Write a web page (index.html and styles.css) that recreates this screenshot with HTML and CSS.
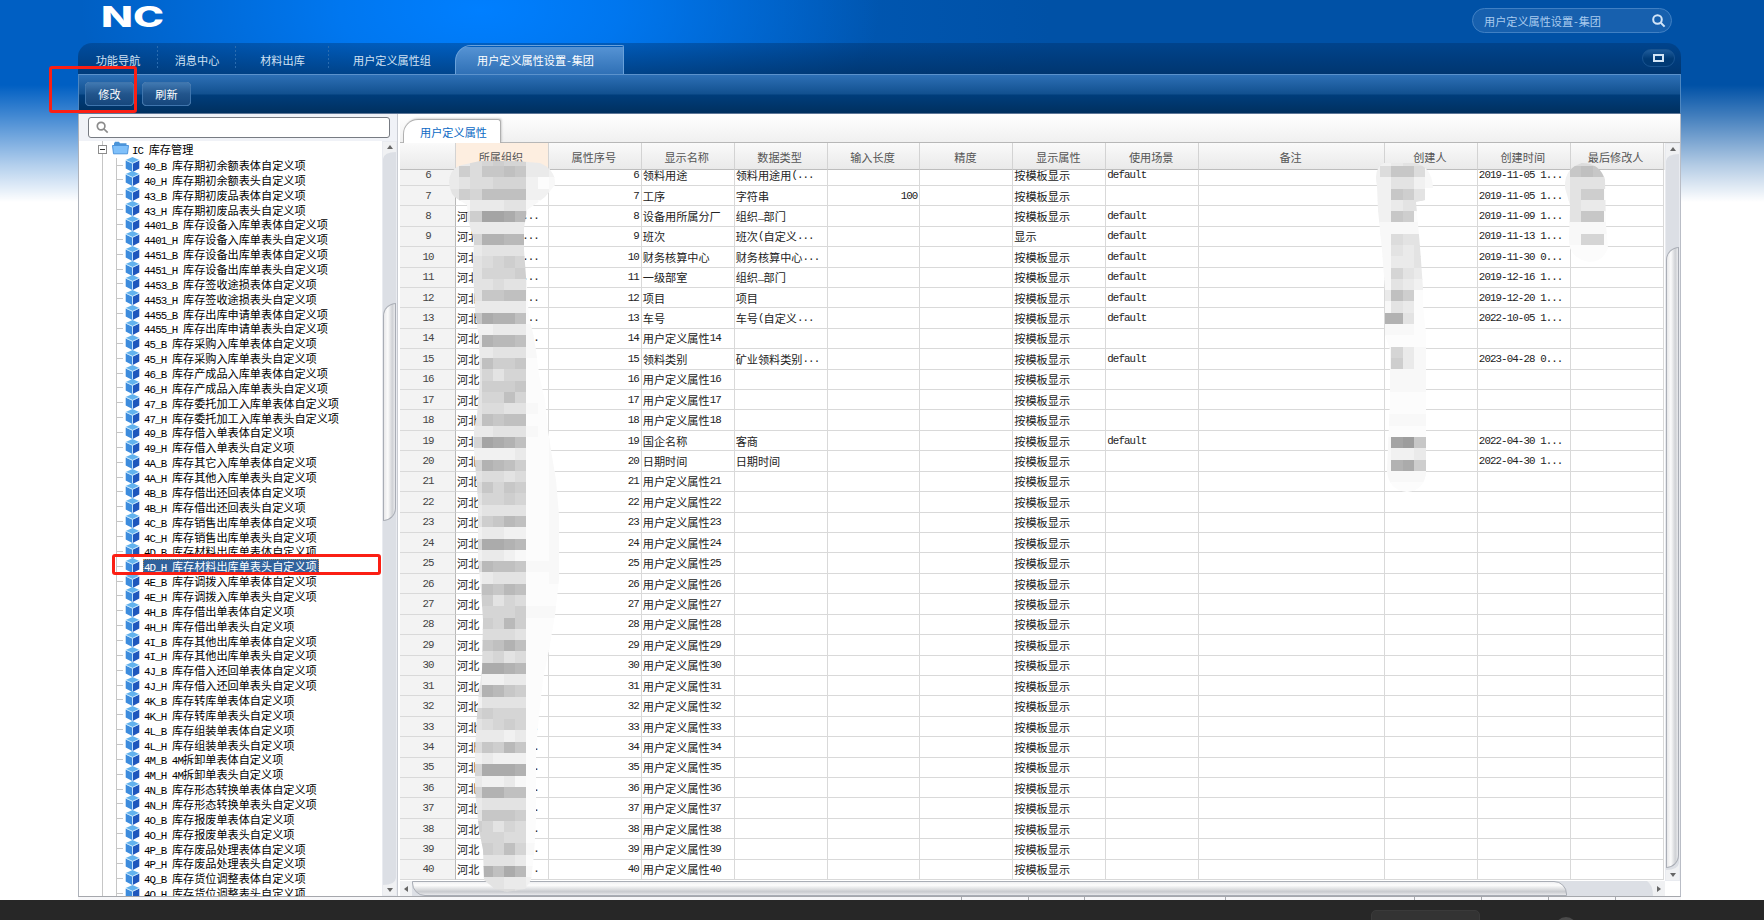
FILE: index.html
```html
<!DOCTYPE html>
<html lang="zh-CN">
<head>
    <meta charset="UTF-8">
    <meta name="viewport" content="width=device-width, initial-scale=1.0">
    <title>用户定义属性设置-集团</title>
    <link rel="stylesheet" href="styles.css">
</head>
<body>
    <div class="app">
        <header class="header">
            <svg class="logo" width="66" height="36" viewBox="0 0 66 36">
                <text x="0" y="24.5" textLength="63" lengthAdjust="spacingAndGlyphs">NC</text>
            </svg>
            <div class="top-search">
                <span>用户定义属性设置<span class="dash">-</span>集团</span>
                <svg width="14" height="14" viewBox="0 0 14 14"><circle cx="5.5" cy="5.5" r="4.3"/><path d="M8.8 8.8 12.6 12.6"/></svg>
            </div>
        </header>

        <nav class="tabs">
            <div class="tab tab-1">功能导航</div>
            <div class="tab tab-2">消息中心</div>
            <div class="tab tab-3">材料出库</div>
            <div class="tab tab-4">用户定义属性组</div>
            <div class="tab active">用户定义属性设置<span class="dash">-</span>集团</div>
            <div class="restore"><i></i></div>
        </nav>

        <div class="toolbar">
            <button>修改</button>
            <button>刷新</button>
        </div>

        <div class="main">
            <aside class="side">
                <div class="side-search">
                    <div class="side-input">
                        <svg width="13" height="13" viewBox="0 0 14 14"><circle cx="5.5" cy="5.5" r="4.1"/><path d="M8.6 8.6 12.6 12.6"/></svg>
                    </div>
                </div>
                <div class="side-body">
                    <div class="tree">
                        <div class="tree-root">
                            <span class="toggle"></span>
                            <svg width="17" height="14" viewBox="0 0 17 14"><path d="M2 2.5 3 .8h4l1 1.4h6.5V6H2z" fill="#4b94d8"/><path d="M.5 4.5h16l-1 8.3h-14z" fill="#7fc0fa" stroke="#4c94dc"/></svg>
                            <span class="root-text">IC 库存管理</span>
                        </div>
                        <div class="tree-list" id="tree-list">
                            <!-- items are added by script -->
                        </div>
                    </div>
                    <div class="vscroll">
                        <div class="arrow up"></div>
                        <div class="track"><div class="thumb side-thumb"></div></div>
                        <div class="arrow down"></div>
                    </div>
                </div>
            </aside>

            <section class="content">
                <div class="panel-tabs"><div class="panel-tab">用户定义属性</div></div>
                <div class="grid-area">
                    <div class="grid">
                        <div class="row head" id="grid-head"></div>
                        <div class="grid-body"><div class="grid-rows" id="grid-rows"></div></div>
                    </div>
                    <div class="vscroll grid-scroll">
                        <div class="arrow up"></div>
                        <div class="track"><div class="thumb grid-thumb"></div></div>
                        <div class="arrow down"></div>
                    </div>
                </div>
                <div class="hscroll">
                    <div class="arrow left"></div>
                    <div class="htrack"><div class="hthumb"></div></div>
                    <div class="arrow right"></div>
                </div>
            </section>
        </div>
        <div class="statusbar">
            <i></i><i></i><i></i><i></i><i></i><i></i><i></i><i></i>
        </div>
    </div>
    <footer class="taskbar"><div class="task"></div><div class="dot"></div></footer>

    <svg class="masks" width="1764" height="920">
        <defs>
            <clipPath id="clip-org"><path d="M449 182Q450 168 462 165L480 161H515L540 163Q556 170 555 185L545 197 537 203 527 210 524 228 524 250 527 290 529 318 533 333 536 350 539 375 545 400 548 430 551 450 556 480 559 515V580L555 615 549 650 543 680 539 715 536 750V820L534 855 531 880 525 889 507 892 495 889 484 880 483 850 479 830 475 790V750L477 715 479 690 482 670 483 620 481 590 478 560V500L474 450V430L477 415 480 380 479 340 475 310 473 270 474 240 468 220 467 205 459 200Q450 196 449 182z"/></clipPath>
            <clipPath id="clip-creator"><path d="M1377 186Q1373 168 1384 163H1414Q1432 166 1433 188H1425V200L1416 202 1419 235 1421 260 1423 289V305L1426 335V470Q1426 490 1407 492 1388 490 1387 470L1390 400V350L1385 335V290L1382 250 1378 210z"/></clipPath>
            <clipPath id="clip-modifier"><path d="M1565 188Q1564 168 1582 163 1600 163 1605 180L1606 225 1608 248Q1603 262 1589 262 1569 258 1569 240L1570 205z"/></clipPath>
        </defs>
        <g id="mask-org" clip-path="url(#clip-org)"></g>
        <g id="mask-creator" clip-path="url(#clip-creator)"></g>
        <g id="mask-modifier" clip-path="url(#clip-modifier)"></g>
    </svg>

    <div class="mark mark-button"></div>
    <div class="mark mark-tree"></div>

    <script>
        const treeItems = [
            '40_B 库存期初余额表体自定义项', '40_H 库存期初余额表头自定义项',
            '43_B 库存期初废品表体自定义项', '43_H 库存期初废品表头自定义项',
            '4401_B 库存设备入库单表体自定义项', '4401_H 库存设备入库单表头自定义项',
            '4451_B 库存设备出库单表体自定义项', '4451_H 库存设备出库单表头自定义项',
            '4453_B 库存签收途损表体自定义项', '4453_H 库存签收途损表头自定义项',
            '4455_B 库存出库申请单表体自定义项', '4455_H 库存出库申请单表头自定义项',
            '45_B 库存采购入库单表体自定义项', '45_H 库存采购入库单表头自定义项',
            '46_B 库存产成品入库单表体自定义项', '46_H 库存产成品入库单表头自定义项',
            '47_B 库存委托加工入库单表体自定义项', '47_H 库存委托加工入库单表头自定义项',
            '49_B 库存借入单表体自定义项', '49_H 库存借入单表头自定义项',
            '4A_B 库存其它入库单表体自定义项', '4A_H 库存其他入库单表头自定义项',
            '4B_B 库存借出还回表体自定义项', '4B_H 库存借出还回表头自定义项',
            '4C_B 库存销售出库单表体自定义项', '4C_H 库存销售出库单表头自定义项',
            '4D_B 库存材料出库单表体自定义项', '4D_H 库存材料出库单表头自定义项',
            '4E_B 库存调拨入库单表体自定义项', '4E_H 库存调拨入库单表头自定义项',
            '4H_B 库存借出单表体自定义项', '4H_H 库存借出单表头自定义项',
            '4I_B 库存其他出库单表体自定义项', '4I_H 库存其他出库单表头自定义项',
            '4J_B 库存借入还回单表体自定义项', '4J_H 库存借入还回单表头自定义项',
            '4K_B 库存转库单表体自定义项', '4K_H 库存转库单表头自定义项',
            '4L_B 库存组装单表体自定义项', '4L_H 库存组装单表头自定义项',
            '4M_B 4M拆卸单表体自定义项', '4M_H 4M拆卸单表头自定义项',
            '4N_B 库存形态转换单表体自定义项', '4N_H 库存形态转换单表头自定义项',
            '4O_B 库存报废单表体自定义项', '4O_H 库存报废单表头自定义项',
            '4P_B 库存废品处理表体自定义项', '4P_H 库存废品处理表头自定义项',
            '4Q_B 库存货位调整表体自定义项', '4Q_H 库存货位调整表头自定义项'
        ];

        const headers = ['', '所属组织', '属性序号', '显示名称', '数据类型', '输入长度', '精度', '显示属性', '使用场景', '备注', '创建人', '创建时间', '最后修改人'];

        // number: [name, type, length, scene, created]
        const details = {
            6: ['领料用途', '领料用途用(...', '', 'default', '2019-11-05 1...'],
            7: ['工序', '字符串', '100', '', '2019-11-05 1...'],
            8: ['设备用所属分厂', '组织_部门', '', 'default', '2019-11-09 1...'],
            9: ['班次', '班次(自定义...', '', 'default', '2019-11-13 1...'],
            10: ['财务核算中心', '财务核算中心...', '', 'default', '2019-11-30 0...'],
            11: ['一级部室', '组织_部门', '', 'default', '2019-12-16 1...'],
            12: ['项目', '项目', '', 'default', '2019-12-20 1...'],
            13: ['车号', '车号(自定义...', '', 'default', '2022-10-05 1...'],
            15: ['领料类别', '矿业领料类别...', '', 'default', '2023-04-28 0...'],
            19: ['国企名称', '客商', '', 'default', '2022-04-30 1...'],
            20: ['日期时间', '日期时间', '', '', '2022-04-30 1...']
        };

        // Latin text is half as wide as a Chinese character
        function mixed(text) {
            return text.replace(/[\x20-\x7e]+/g, s => `<span class="en">${s}</span>`);
        }

        const cube = `<svg class="cube" width="15" height="15" viewBox="0 0 15 15"><path d="M7.5 0 14.3 3 7.5 6.2.7 3z" fill="#62b2ee"/><path d="M.7 3.4 7.3 6.5V15L.7 11.6z" fill="#3d8cdd"/><path d="M14.3 3.4 7.7 6.5V15l6.6-3.4z" fill="#1f57bd"/><path d="M.9 3.2 7.5 6.3 14.1 3.2M7.5 6.3V14.5" fill="none" stroke="#c5e6fc" stroke-width=".9"/></svg>`;

        document.getElementById('tree-list').innerHTML = treeItems.map(item => `
            <div class="tree-item">
                <span class="branch"></span>${cube}
                <span class="label${item.startsWith('4D_H') ? ' selected' : ''}">${mixed(item)}</span>
            </div>`).join('');
        document.querySelector('.root-text').innerHTML = mixed('IC 库存管理');

        document.getElementById('grid-head').innerHTML = headers.map(h => `<div>${h}</div>`).join('');

        let rows = '';
        for (let n = 6; n <= 40; n++) {
            const d = details[n] || ['用户定义属性' + n, '', '', '', ''];
            let org = '河北';
            if (n < 8) org = '';
            let dots = '';
            if (n >= 8 && n <= 12) dots = '...';
            if (n === 13) dots = '..';
            if (n === 14 || n >= 33) dots = '.';
            const show = n === 9 ? '显示' : '按模板显示';
            rows += `<div class="row">
                <div>${mixed('' + n)}</div>
                <div class="org">${org}${mixed(dots)}</div>
                <div class="num">${mixed('' + n)}</div>
                <div>${mixed(d[0])}</div>
                <div>${mixed(d[1])}</div>
                <div class="num">${mixed(d[2])}</div>
                <div></div>
                <div>${show}</div>
                <div>${mixed(d[3])}</div>
                <div></div>
                <div></div>
                <div>${mixed(d[4])}</div>
                <div></div>
            </div>`;
        }
        document.getElementById('grid-rows').innerHTML = rows;

        // Mosaic over the names: one hex digit per block, 0 is dark and f is white
        function mosaic(id, x0, lines) {
            let out = '';
            lines.forEach((line, r) => {
                [...line].forEach((ch, c) => {
                    const v = ch === 'f' ? 252 : 150 + parseInt(ch, 16) * 7;
                    const x = Math.round(x0 + c * 11.2);
                    const y = Math.round(154.7 + r * 11.29);
                    out += `<rect x="${x}" y="${y}" width="12" height="12" fill="rgb(${v},${v},${v})"/>`;
                });
            });
            document.getElementById(id).innerHTML = out;
        }

        mosaic('mask-org', 448, [
            'dca9899ccee', 'c8a7767ccde', 'cbaa999dfee', 'b896666ddee', 'eecccbbefff', 'cc82235ffff', 'ddcccccffff', 'cc94455ffff',
            'ddcbbbbffff', 'ddba989ffff', 'ddb9998ffff', 'ddbbabbffff', 'ddb7766ffff', 'ddcccccffff', 'cc73446ffff', 'ddddccceeff',
            'ddc4556efff', 'ddccbbbefff', 'ddb6887ffff', 'ddb9b99ffff', 'ddb8887ffff', 'ccb9969ffef', 'ddbaabbefef', 'ddb6766ffef',
            'ddccbbbefee', 'dd92346ffee', 'ddddddcffee', 'dd94568ffee', 'ddbaabaffee', 'dda7978ffee', 'ddb9989ffee', 'ddcbbbbffee',
            'ddb8756ffee', 'dddccddffee', 'dd93345ffee', 'dddccdeffee', 'dda5667eeee', 'dddcbbbffee', 'ddb6756ffff', 'ddb8b9affff',
            'ddb9998eeee', 'ddb8958ffff', 'dddaaabffff', 'ddb7646ffff', 'ddda9baffff', 'dd93345ffff', 'ddcddccffff', 'ddb4578ffff',
            'dddbbbbffff', 'dd98999ffff', 'ddba989ffff', 'ddcccdcffff', 'dda7857ffff', 'dddcdddffff', 'dd93334ffff', 'ddcddceffff',
            'dd94466ffff', 'ddcbbbbffff', 'ddb7778ffff', 'dd89b9affff', 'dd999aaffff', 'ddb8969eeee', 'ddcbbbcffff', 'ddb4635eeee',
            'dddbbccdddd', 'dddaaabbbbb'
        ]);
        mosaic('mask-creator', 1369, [
            'ddcbbccc', 'da77aeee', 'ddbbdeee', 'dd78bbee', 'ddcbbeee', 'dd78ffff', 'eeeeeeee', 'eeabbfff', 'eebcbfff', 'eeccbfff',
            'ee9bcfff', 'eebcdfff', 'dc68ffff', 'eebcffff', 'e44bffff', 'eeeeffff', 'ffffffff', 'ee9ceeff', 'ee8ceeff', 'eeeeeeee',
            'eeeeeeee', 'ffffffff', 'ffffffff', 'eeeeeeee', 'ffffffff', 'ee217777', 'eeddcccc', 'ee438888', 'eeeeeeee', 'ffffffff', 'ffffffff'
        ]);
        mosaic('mask-modifier', 1559, [
            'aaaaaa', 'd7679f', 'dbbbbb', 'db88ff', 'dbcccf', 'db77ff', 'eeeeee', 'ee99ff', 'ffffff', 'ffffff', 'ffffff'
        ]);
    </script>
</body>
</html>
```
FILE: styles.css
```css
/* Global Styles */
* {
    box-sizing: border-box;
}

body {
    margin: 0;
    width: 1764px;
    height: 920px;
    overflow: hidden;
    display: flex;
    flex-direction: column;
    font-family: "Noto Sans CJK SC", sans-serif;
    font-size: 11.15px;
    color: #222;
    background-color: #fff;
    background-image:
        linear-gradient(to bottom, rgba(255, 255, 255, 0) 85px, rgba(255, 255, 255, 0.25) 115px, rgba(255, 255, 255, 0.7) 165px, #fff 202px),
        radial-gradient(ellipse 400px 190px at 480px 10px, #007fff 0%, rgba(0, 127, 255, 0.75) 35%, rgba(0, 110, 225, 0) 100%),
        linear-gradient(to right, #005fc3 0, #005fc3 500px, #0051a6 1050px);
}

.en {
    font-family: "Liberation Mono", monospace;
    font-size: 10.8px;
    letter-spacing: -0.905px;
    white-space: pre;
}

.dash {
    display: inline-block;
    width: 5.6px;
    text-align: center;
}

.app {
    width: 1603px;
    height: 900px;
    margin-left: 78px;
    display: flex;
    flex-direction: column;
}

/* Header */
.header {
    height: 43px;
    flex: none;
    display: flex;
    justify-content: space-between;
    align-items: flex-start;
    padding: 2px 9px 0 23px;
}

.logo text {
    font-family: Inter, sans-serif;
    font-weight: 800;
    font-size: 28px;
    fill: #fff;
}

.top-search {
    width: 200px;
    height: 25px;
    margin-top: 6px;
    padding: 0 5px 0 11px;
    display: flex;
    align-items: center;
    justify-content: space-between;
    border: 1px solid #4080c4;
    border-radius: 13px;
    background-color: #1760ae;
    color: #a9cbef;
}

.top-search svg {
    fill: none;
    stroke: #d3e5f8;
    stroke-width: 2;
}

/* Tabs */
.tabs {
    height: 31px;
    flex: none;
    display: flex;
    align-items: flex-end;
    border-radius: 14px 14px 0 0;
    background-image: linear-gradient(to bottom, rgba(0, 42, 92, 0.35), rgba(0, 36, 76, 0.6));
    color: #d0e1f3;
}

.tab {
    height: 29px;
    line-height: 30px;
    text-align: center;
    background-image: repeating-linear-gradient(to bottom, #2a6cb0 0 2px, transparent 2px 4px);
    background-size: 1px 23px;
    background-position: right 1px;
    background-repeat: no-repeat;
}

.tab-1 {
    width: 80px;
}

.tab-2 {
    width: 78px;
}

.tab-3 {
    width: 93px;
}

.tab-4 {
    width: 126px;
    background-image: none;
}

.tab.active {
    width: 169px;
    padding-right: 8px;
    border: 1px solid #69a1da;
    border-bottom: none;
    border-radius: 16px 2px 0 0;
    background-image: linear-gradient(to bottom, #5593d4, #2e6fb5);
    background-size: auto;
    color: #fff;
    line-height: 28px;
}

.restore {
    width: 33px;
    height: 18px;
    margin: 6px 6px 0 auto;
    align-self: flex-start;
    display: flex;
    align-items: center;
    justify-content: center;
    border: 1px solid #195491;
    border-radius: 9px;
    background-image: linear-gradient(to bottom, #1e5c9c, #003a75 55%);
}

.restore i {
    width: 11px;
    height: 8px;
    border: 2px solid #d2e4f5;
}

/* Toolbar */
.toolbar {
    height: 40px;
    flex: none;
    display: flex;
    align-items: flex-start;
    gap: 8px;
    padding: 7px 6px;
    border: 1px solid #4d86c0;
    border-top-color: #5b92cc;
    border-bottom: 1px solid #5d7697;
    background-image: linear-gradient(to bottom, #2e70b6 0, #11508f 19px, #003d7b 20px, #00305f 100%);
}

.toolbar button {
    width: 49px;
    height: 24px;
    padding: 0;
    border: 1px solid #3f75ad;
    border-radius: 4px;
    background-image: linear-gradient(to bottom, #4078b1, #22558c 50%, #16477d);
    color: #fff;
    font-family: inherit;
    font-size: 11.15px;
}

/* Main area */
.main {
    height: 783px;
    flex: none;
    display: flex;
    border-left: 1px solid #aeb2ba;
    border-right: 1px solid #b9bdc6;
    border-bottom: 1px solid #a5a7ac;
    background-color: #fff;
}

.side {
    width: 318px;
    flex: none;
    display: flex;
    flex-direction: column;
}

.side-search {
    height: 27px;
    padding: 3px 7px 1px 9px;
    background-color: #f0f2f7;
}

.side-input {
    height: 21px;
    width: 302px;
    display: flex;
    align-items: center;
    padding-left: 7px;
    border: 1px solid #777b82;
    border-radius: 3px;
    background-color: #fff;
}

.side-input svg {
    fill: none;
    stroke: #8b8b8b;
    stroke-width: 1.8;
}

.side-body {
    flex: 1;
    min-height: 0;
    display: flex;
}

.tree {
    width: 303px;
    overflow: hidden;
    padding-left: 23px;
    background-image: linear-gradient(#c6c6c6, #c6c6c6);
    background-size: 1px 100%;
    background-position: 23px 0;
    background-repeat: no-repeat;
}

.tree-root {
    height: 16.6px;
    display: flex;
    align-items: center;
    margin-left: -4px;
    color: #000;
}

.tree-root svg {
    margin: 0 3px 2px 5px;
}

.toggle {
    width: 9px;
    height: 9px;
    border: 1px solid #8d8d8d;
    background: linear-gradient(#333, #333) center / 5px 1px no-repeat #fff;
}

.tree-list {
    margin-left: 14px;
    border-left: 1px solid #c6c6c6;
}

.tree-item {
    height: 14.86px;
    display: flex;
    align-items: center;
    white-space: nowrap;
    color: #000;
}

.branch {
    width: 6px;
    height: 1px;
    background-color: #c6c6c6;
}

.cube {
    flex: none;
    margin: 0 3px 2px 2px;
}

.label {
    height: 14px;
    line-height: 14px;
    padding: 0 2px 0 1px;
}

.label.selected {
    background-color: #30629c;
    color: #fff;
    outline: 1px dotted #c58a50;
    outline-offset: -1px;
}

/* Scrollbars */
.vscroll {
    width: 15px;
    flex: none;
    display: flex;
    flex-direction: column;
    border: 1px solid #e9ebf0;
    background-color: #dcdfe5;
}

.arrow {
    flex: none;
    height: 10px;
    display: flex;
    align-items: center;
    justify-content: center;
    background-color: #f0f1f3;
}

.arrow::before {
    content: "";
    border: 3.5px solid transparent;
}

.arrow.up::before {
    border-top: none;
    border-bottom: 4px solid #666;
}

.arrow.down::before {
    border-bottom: none;
    border-top: 4px solid #666;
}

.track {
    flex: 1;
    display: flex;
    flex-direction: column;
}

.track::before,
.track::after {
    content: "";
    height: 7px;
    flex: none;
    background-color: #f0f1f3;
}

.track::before {
    clip-path: path("M0 0H13Q1 0 0 7z");
}

.track::after {
    margin-top: auto;
    clip-path: path("M0 7H13V0Q12 7 0 7z");
}

.thumb {
    width: 13px;
    flex: none;
    border: 1px solid #a9adb5;
    border-radius: 13px 0 13px 0;
    background-image: linear-gradient(to right, #e8e8ea, #fbfbfb 35%, #cfd1d5 75%, #e8e9ec);
}

.side-thumb {
    height: 218px;
    margin-top: 144px;
}

.grid-thumb {
    height: 621px;
    margin-top: 86px;
    margin-bottom: -10px;
}

/* Content */
.content {
    flex: 1;
    min-width: 0;
    display: flex;
    flex-direction: column;
    padding-left: 2px;
    border-left: 1px solid #c9ccd3;
}

.panel-tabs {
    height: 29px;
    flex: none;
    padding: 5px 0 0 3px;
    border-bottom: 1px solid #b7b7b7;
    background-image: linear-gradient(to bottom, #fff, #f0f0f0);
}

.panel-tab {
    width: 98px;
    height: 24px;
    line-height: 25px;
    text-align: center;
    padding-left: 3px;
    border: 1px solid #b0b0b0;
    border-bottom: none;
    border-radius: 15px 3px 0 0;
    background-color: #fff;
    box-shadow: 1px -1px 2px rgba(0, 0, 0, 0.15);
    color: #0b69c4;
}

.grid-area {
    height: 738px;
    flex: none;
    display: flex;
}

.grid {
    flex: 1;
    min-width: 0;
    display: flex;
    flex-direction: column;
}

.row {
    height: 20.425px;
    display: grid;
    grid-template-columns: 56px repeat(8, 92.9px) 185.8px repeat(3, 92.9px);
    flex: none;
}

.row > div {
    display: flex;
    align-items: center;
    padding-left: 1px;
    border-right: 1px solid #d9d9d9;
    border-bottom: 1px solid #d9d9d9;
    white-space: nowrap;
}

.row > div:first-child {
    justify-content: center;
    border-right-color: #b9b9b9;
    background-color: #f3f3f3;
    color: #444;
}

.row > .num {
    justify-content: flex-end;
    padding-right: 2px;
}

.row > .org {
    justify-content: space-between;
    padding-right: 9px;
}

.row.head {
    height: 27px;
    background-image: linear-gradient(to bottom, #fafafa, #e9e9e9);
}

.row.head > div {
    justify-content: center;
    padding: 2px 2px 0 0;
    border-bottom-color: #bdbdbd;
    border-right-color: #d3d3d3;
    background-color: transparent;
    color: #555;
}

.row.head > div:nth-child(2) {
    background-color: #fdeee0;
}

.grid-body {
    flex: 1;
    min-height: 0;
    overflow: hidden;
}

.grid-rows {
    margin-top: -4.6px;
}

.grid-scroll {
    width: 15px;
}

.hscroll {
    height: 15px;
    width: 1265px;
    flex: none;
    display: flex;
    background-color: #dcdfe5;
}

.hscroll .arrow {
    width: 12px;
    height: auto;
}

.arrow.left::before {
    border-left: none;
    border-right: 4px solid #666;
}

.arrow.right::before {
    border-right: none;
    border-left: 4px solid #666;
}

.htrack {
    flex: 1;
    display: flex;
}

.htrack::after {
    content: "";
    width: 6px;
    margin-left: auto;
    background-color: #f0f1f3;
    clip-path: path("M0 0H6V15Q6 4 0 0z");
}

.hthumb {
    width: 1155px;
    border: 1px solid #a9adb5;
    border-radius: 0 13px 0 13px;
    background-image: linear-gradient(to bottom, #f0f0f2, #fcfcfc 25%, #c9cbcf 75%, #e8e9ec);
}

.statusbar {
    height: 3px;
    display: grid;
    grid-template-columns: 884px 67px 56px 141px 189px 67px 67px 67px;
    background-color: #f7f7f9;
}

.statusbar i {
    border-right: 1px solid #a5a7ac;
}

/* Taskbar */
.taskbar {
    height: 20px;
    flex: none;
    display: flex;
    align-items: flex-start;
    overflow: hidden;
    background-color: #272727;
}

.task {
    width: 109px;
    height: 20px;
    margin: 10px 0 0 1371px;
    border: 1px solid #3a3a3a;
    border-radius: 5px;
    background-color: #333;
}

.dot {
    width: 22px;
    height: 22px;
    margin: 17px 0 0 75px;
    border-radius: 50%;
    background-color: #4a4a4a;
}

/* Overlays */
.masks {
    position: absolute;
    left: 0;
    top: 0;
}

.mark {
    position: absolute;
    border: 3px solid #fb1f14;
    border-radius: 3px;
}

.mark-button {
    left: 49px;
    top: 66px;
    width: 88px;
    height: 47px;
}

.mark-tree {
    left: 112px;
    top: 554px;
    width: 269px;
    height: 21px;
}
```
